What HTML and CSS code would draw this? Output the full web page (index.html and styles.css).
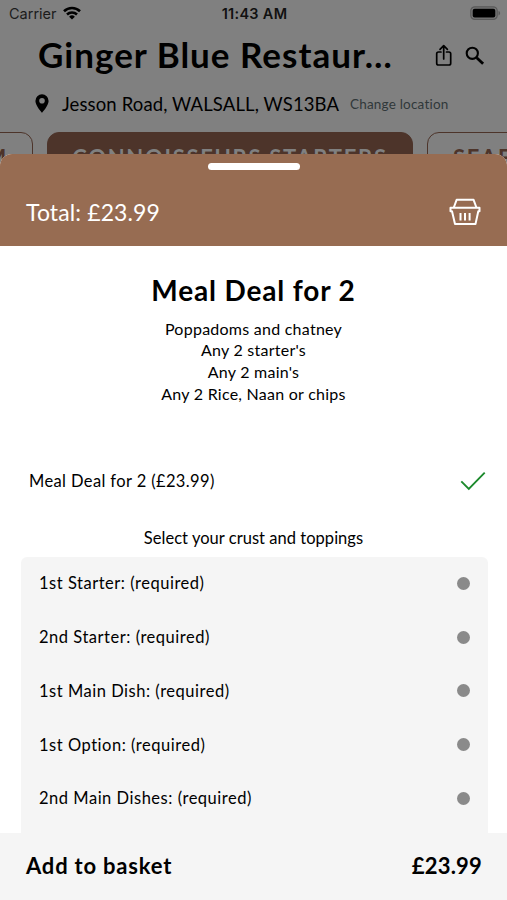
FILE: index.html
```html
<!DOCTYPE html>
<html lang="en">
<head>
<meta charset="utf-8">
<title>Ginger Blue Restaurant</title>
<link rel="stylesheet" href="styles.css">
</head>
<body>
<div class="phone">
  <div class="screen">
    <div class="status">
      <div class="carrier"><span>Carrier</span>
        <svg class="wifi" width="18" height="14" viewBox="0 0 18 14"><g fill="none" stroke="#000" stroke-width="2.6"><path d="M1 5.2a11.6 11.6 0 0 1 16 0"/><path d="M4 8.5a7.3 7.3 0 0 1 10 0"/></g><path d="M9 13.6 6.1 10.7a4.2 4.2 0 0 1 5.8 0z"/></svg>
      </div>
      <span class="time">11:43 AM</span>
      <svg class="battery" width="31" height="15" viewBox="0 0 31 15"><rect x=".8" y=".8" width="26.4" height="12.6" rx="4" fill="#777" stroke="#5a5a5a" stroke-width="1.2"/><rect x="2.7" y="2.7" width="22.6" height="8.8" rx="2"/><path d="M28.5 5v4.4c1-.4 1.6-1.2 1.6-2.2s-.6-1.8-1.6-2.2z" fill="#5a5a5a"/></svg>
    </div>
    <div class="title-row">
      <h1>Ginger Blue Restaur…</h1>
      <svg class="share" width="18" height="24" viewBox="0 0 18 24"><g fill="none" stroke="#000" stroke-width="1.7" stroke-linecap="round" stroke-linejoin="round"><path d="M6 8H3.5Q1.7 8 1.7 9.8v9.4Q1.7 21 3.5 21h10.400q1.800 0 1.800-1.800V9.800Q15.700 8 13.900 8H11.500"/><path d="M8.700 15V2M5 5.400 8.700 1.700l3.700 3.700"/></g></svg>
      <svg class="search" width="20" height="20" viewBox="0 0 20 20"><g fill="none" stroke="#000"><circle cx="7.300" cy="7.300" r="5.600" stroke-width="2.100"/><path d="m11.700 11.700 6.400 6" stroke-width="2.900"/></g></svg>
    </div>
    <div class="address">
      <svg width="14" height="19" viewBox="0 0 14 19"><path fill-rule="evenodd" d="M7 .3a6.600 6.600 0 0 0-6.600 6.600C.4 11.500 7 18.700 7 18.700s6.600-7.200 6.600-11.800A6.600 6.600 0 0 0 7 .3zm0 3.700a2.800 2.800 0 1 1 0 5.600 2.800 2.800 0 0 1 0-5.600z"/></svg>
      <span class="street">Jesson Road, WALSALL, WS13BA</span>
      <span class="change">Change location</span>
    </div>
    <div class="tabs">
      <div class="tab tab-prev">M</div>
      <div class="tab tab-active">CONNOISSEURS STARTERS</div>
      <div class="tab tab-next">SEAF</div>
    </div>
  </div>
  <div class="sheet">
    <header class="sheet-head">
      <div class="handle"></div>
      <div class="total-row">
        <span class="total">Total: £23.99</span>
        <svg width="32" height="28" viewBox="0 0 32 28"><g fill="none" stroke="#fff" stroke-width="2" stroke-linejoin="round"><path d="M4.800 9.500 7.600 1.800h17l2.800 7.700"/><path d="M1.500 9.800h29v3.500h-1.200L26.500 26H6L3 13.300H1.500z"/><path d="M11.500 15v7.500M16 15v7.500M20.600 15v7.500"/></g></svg>
      </div>
    </header>
    <main class="content">
      <h2>Meal Deal for 2</h2>
      <div class="desc">
        <p>Poppadoms and chatney</p>
        <p>Any 2 starter's</p>
        <p>Any 2 main's</p>
        <p>Any 2 Rice, Naan or chips</p>
      </div>
      <div class="choice">
        <span>Meal Deal for 2 (£23.99)</span>
        <svg width="26" height="20" viewBox="0 0 26 20"><path d="m1.300 10.300 7.500 7.500L24.700 1.700" fill="none" stroke="#1c8a2c" stroke-width="1.900"/></svg>
      </div>
      <p class="hint">Select your crust and toppings</p>
      <ul class="options">
        <li><span>1st Starter: (required)</span><i></i></li>
        <li><span>2nd Starter: (required)</span><i></i></li>
        <li><span>1st Main Dish: (required)</span><i></i></li>
        <li><span>1st Option: (required)</span><i></i></li>
        <li><span>2nd Main Dishes: (required)</span><i></i></li>
      </ul>
    </main>
    <footer class="basket"><span class="add">Add to basket</span><span class="price">£23.99</span></footer>
  </div>
</div>
</body>
</html>
```
FILE: styles.css
```css
* { box-sizing: border-box; }
body { margin: 0; font-family: Lato, "Liberation Sans", sans-serif; color: #000; }
h1, h2, p, ul { margin: 0; padding: 0; }
svg { display: block; flex: none; }
.phone { position: relative; width: 507px; height: 900px; overflow: hidden; background: #808080; white-space: nowrap; }

.status { height: 27px; display: grid; grid-template-columns: 1fr auto 1fr; align-items: center; padding: 0 6px 0 9px; font-family: Inter, sans-serif; }
.carrier { display: flex; align-items: center; gap: 6px; font-size: 14.5px; color: #1c1c1c; }
.wifi { margin-top: -1px; }
.time { font-size: 14.5px; font-weight: 600; color: #111; letter-spacing: .3px; margin-left: -1px; }
.battery { justify-self: end; }
.title-row { height: 56px; display: flex; align-items: center; padding-left: 38px; }
h1 { width: 397px; font-size: 35px; line-height: 54px; height: 56px; font-weight: 700; letter-spacing: 1px; }
.share { margin-top: 1px; }
.search { margin-left: 12px; margin-top: 1px; }
.address { height: 41px; display: flex; align-items: center; padding-left: 35px; }
.street { width: 288px; margin-left: 13px; font-size: 18.5px; letter-spacing: .12px; }
.change { font-size: 13.5px; color: #30383a; letter-spacing: .2px; }
.tabs { display: flex; gap: 14px; margin-top: 8px; }
.tab { flex: none; height: 54px; border: 1.5px solid #4d342a; border-radius: 12px; color: #4d342a; font-size: 22px; font-weight: 700; line-height: 49px; text-align: center; letter-spacing: 1.7px; }
.tab-prev { width: 140px; margin-left: -107px; text-align: right; padding-right: 24px; }
.tab-active { width: 366px; background: #4d342a; color: #808080; }
.tab-next { width: 160px; text-align: left; padding-left: 25px; }

.sheet { position: absolute; inset: 154px 0 0; display: flex; flex-direction: column; background: #fff; border-radius: 12px 12px 0 0; overflow: hidden; }
.sheet-head { height: 92px; flex: none; background: #976c52; padding-top: 9px; }
.handle { width: 92px; height: 7px; border-radius: 4px; background: #fff; margin: 0 auto; }
.total-row { display: flex; justify-content: space-between; align-items: center; height: 48px; margin-top: 18px; padding: 0 26px 0 26px; color: #fff; }
.total { font-size: 23px; letter-spacing: .12px; line-height: 26px; margin-top: -1px; }
.content { flex: 1; min-height: 0; overflow: hidden; text-align: center; }
h2 { font-size: 28px; line-height: 40px; margin-top: 24px; font-weight: 700; letter-spacing: .85px; }
.desc { margin-top: 7.5px; font-size: 16px; line-height: 21.7px; letter-spacing: .25px; }
.choice { height: 40px; display: flex; align-items: center; justify-content: space-between; margin-top: 56.5px; padding: 0 21px 0 29px; font-size: 16.5px; letter-spacing: .38px; }
.hint { margin-top: 26px; font-size: 16.5px; line-height: 22px; letter-spacing: .03px; }
.options { list-style: none; margin: 8px 19px 0 21px; background: #f5f5f5; border-radius: 6px 6px 0 0; height: 290px; }
.options li { height: 53.8px; display: flex; align-items: center; justify-content: space-between; padding: 0 18.5px 1px 18px; font-size: 16.5px; line-height: 20px; letter-spacing: .52px; }
.options i { width: 13px; height: 13px; border-radius: 50%; background: #8a8a8a; }
.basket { height: 67px; flex: none; display: flex; align-items: center; justify-content: space-between; padding: 0 25px 2px 26px; background: #f5f5f5; font-size: 22px; font-weight: 700; }
.add { letter-spacing: .8px; }
.price { letter-spacing: .2px; }
```
